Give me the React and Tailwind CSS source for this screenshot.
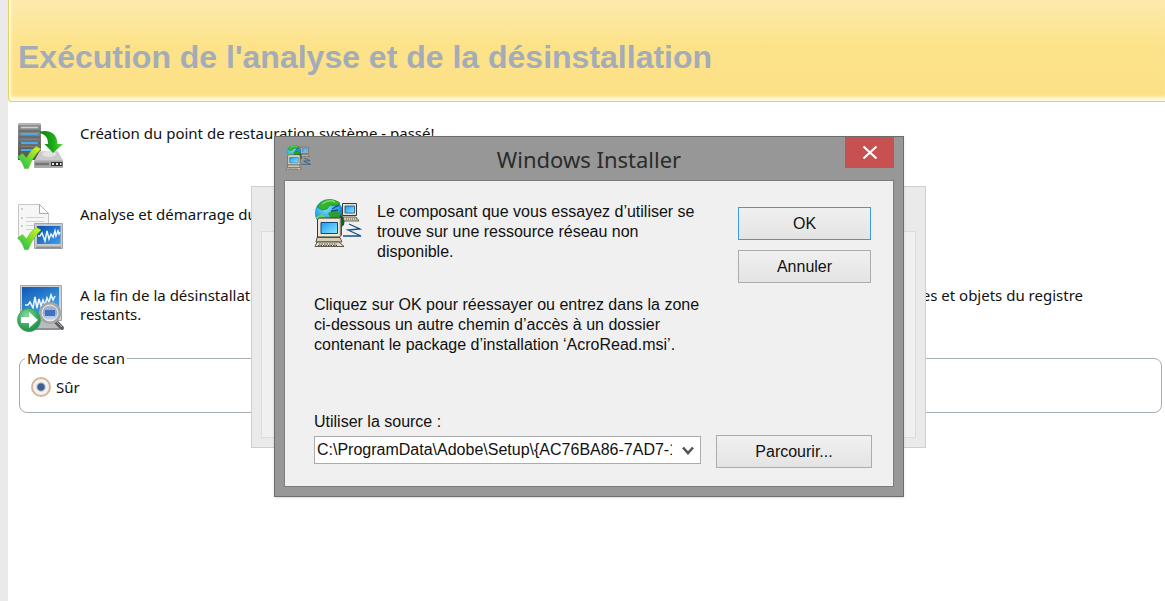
import React, { useState } from 'react';

const CheckMark = ({ id }) => (
  <>
    <linearGradient id={id} x1="0" y1="1" x2="1" y2="0">
      <stop offset="0" stopColor="#12b56a" />
      <stop offset="0.5" stopColor="#6fdc2c" />
      <stop offset="1" stopColor="#eaf71f" />
    </linearGradient>
    <path
      d="M0.500 35l5-3.500 4 4.500c2.500-5 6-9.500 10-11.500l4.500 2.500C18.500 32 14.500 38 11.500 46.500H7.500C6 42 4 38 0.500 35z"
      fill={`url(#${id})`}
      stroke="#6cc42a"
      strokeWidth="0.6"
    />
  </>
);

const RestoreIcon = () => (
  <svg viewBox="0 0 48 48" className="w-12 h-12 shrink-0" aria-hidden="true">
    <defs>
      <linearGradient id="tower" x1="0" y1="0" x2="0" y2="1">
        <stop offset="0" stopColor="#929292" />
        <stop offset="1" stopColor="#505050" />
      </linearGradient>
      <linearGradient id="arrow" x1="0" y1="0" x2="1" y2="0">
        <stop offset="0" stopColor="#0c7a10" />
        <stop offset="0.6" stopColor="#1fae1a" />
        <stop offset="1" stopColor="#58dc38" />
      </linearGradient>
      <linearGradient id="drive" x1="0" y1="0" x2="0" y2="1">
        <stop offset="0" stopColor="#d9d9d9" />
        <stop offset="1" stopColor="#9a9a9a" />
      </linearGradient>
    </defs>
    <path d="M1 3l1-2h21l1 2v35H1z" fill="url(#tower)" />
    <path d="M1 3l1-2h21l1 2z" fill="#b5b5b5" />
    <path d="M4 5.500h17" stroke="#d0d0d0" strokeWidth="1.500" />
    <path d="M2 9h21M2 15h21M2 21h21M2 27h21" stroke="#5a5a5a" />
    <path d="M4 12h17M4 21h17M4 28h17" stroke="#45aee8" strokeWidth="1.800" />
    <path d="M4 17.500h17M4 24.500h17" stroke="#7e7e7e" />
    <path d="M23 29h18l5 10v7H17v-7z" fill="url(#drive)" />
    <path d="M24 30h16l5 8H19z" fill="#cbcbcb" />
    <ellipse cx="32" cy="32" rx="7" ry="3" fill="#e2e2e2" />
    <path d="M17 39h29v7H17z" fill="#a8a8a8" />
    <path d="M18 42h14" stroke="#757575" strokeWidth="2.500" />
    <path d="M34 40h11.500v4H34z" fill="#2e2e2e" />
    <path d="M35 41h2v2h-2zM39 41h2v2h-2zM43 41h1.500v2H43z" fill="#eee" />
    <path d="M23 9.500c9-2 17 1 17.500 12.500h5.500l-10 9-8.500-9H31c0-6-2-9-8-11z" fill="url(#arrow)" />
    <CheckMark id="check-restore" />
  </svg>
);

const AnalyseIcon = () => (
  <svg viewBox="0 0 48 48" className="w-12 h-12 shrink-0" aria-hidden="true">
    <defs>
      <linearGradient id="screen-small" x1="0" y1="0" x2="1" y2="1">
        <stop offset="0" stopColor="#0b4fae" />
        <stop offset="1" stopColor="#3e9de8" />
      </linearGradient>
    </defs>
    <path d="M1.500 1.500h21l9 9V36h-30z" fill="#f6f6f6" stroke="#c6c6c6" />
    <path d="M22.500 1.500v9h9z" fill="#fff" stroke="#aaa" />
    <path d="M9 14.500h18M9 18.500h18M9 22.500h18M9 26.500h12" stroke="#d2d2d2" />
    <path d="M4 5h2v2H4zM4 14h2v2H4zM4 22h2v2H4z" fill="#ccc" />
    <path d="M17.500 20.500h28v25h-28z" fill="#c7c9cc" stroke="#a2a4a8" />
    <path d="M19 43.500h25v2H19z" fill="#8c8e92" />
    <path d="M20 23h23.500v18H20z" fill="url(#screen-small)" />
    <path
      d="M21 33h2l2-3 3 8 2-10 2 8 2-5 2 3 2-6 1 5 2-5 1 3 1-2"
      fill="none"
      stroke="#e8f6ff"
      strokeWidth="1.500"
    />
    <CheckMark id="check-analyse" />
  </svg>
);

const ScanIcon = () => (
  <svg viewBox="0 0 48 48" className="w-12 h-12 shrink-0" aria-hidden="true">
    <defs>
      <linearGradient id="screen-big" x1="0" y1="0" x2="0.6" y2="1">
        <stop offset="0" stopColor="#0f59b4" />
        <stop offset="1" stopColor="#46a4ea" />
      </linearGradient>
      <radialGradient id="go" cx="0.4" cy="0.3" r="0.8">
        <stop offset="0" stopColor="#8ed9a0" />
        <stop offset="0.5" stopColor="#3fae63" />
        <stop offset="1" stopColor="#178443" />
      </radialGradient>
      <linearGradient id="lens" x1="0" y1="0" x2="0" y2="1">
        <stop offset="0" stopColor="#b5bcc6" />
        <stop offset="0.5" stopColor="#8aa9d8" />
        <stop offset="1" stopColor="#f0f2f5" />
      </linearGradient>
    </defs>
    <path d="M3.500 1.500h41v35h-41z" fill="#d0d2d5" stroke="#a3a5a8" />
    <path d="M5 3h37v29H5z" fill="url(#screen-big)" />
    <path d="M13 37h29l3 8H10z" fill="#b9bbbe" />
    <path d="M12 44h31v2H12z" fill="#8e9093" />
    <path
      d="M8 21h3l2-3 3 6 2-11 2 11 2-9 2 7 2-6 2 5 2-7 2 4 2-7 2 5 2-4"
      fill="none"
      stroke="#e8f6ff"
      strokeWidth="1.600"
    />
    <path d="M38 37l7 7" stroke="#5e5e5e" strokeWidth="4" strokeLinecap="round" />
    <path d="M38 36l7 7" stroke="#b0b0b0" strokeWidth="1" />
    <circle cx="33" cy="29" r="9.500" fill="url(#lens)" stroke="#a6a6a6" strokeWidth="3" />
    <circle cx="33" cy="29" r="8" fill="none" stroke="#eee" />
    <path d="M28 26h10v6H28z" fill="#4470bd" />
    <circle cx="12" cy="36" r="11.500" fill="url(#go)" stroke="#3b9a5c" strokeWidth="0.800" />
    <path d="M4 33h8v-5l9 8-9 8v-5H4z" fill="#fff" />
  </svg>
);

const InstallerIcon = ({ id, className }) => (
  <svg viewBox="0 0 48 48" className={className} aria-hidden="true">
    <defs>
      <radialGradient id={`${id}-globe`} cx="0.4" cy="0.3" r="0.8">
        <stop offset="0" stopColor="#7fe4fb" />
        <stop offset="0.6" stopColor="#1d9be0" />
        <stop offset="1" stopColor="#0b3f93" />
      </radialGradient>
      <linearGradient id={`${id}-glass`} x1="0" y1="0" x2="1" y2="1">
        <stop offset="0" stopColor="#1f9cf0" />
        <stop offset="1" stopColor="#8ce8ff" />
      </linearGradient>
    </defs>
    <circle cx="15" cy="14" r="14" fill={`url(#${id}-globe)`} />
    <path d="M3 8C7 1 18-2 26 4l-3 3-7-1-3 4-5 1-3-2z" fill="#35b32b" stroke="#1c7c1c" strokeWidth="0.600" />
    <path d="M8 5c4-3 9-4 13-2" fill="none" stroke="#7be05f" strokeWidth="1.500" />
    <path d="M14 14l6-3 5 2 1 6-4 6-5-4-1-3z" fill="#2f9e2b" />
    <path d="M2 18l6-3 5 5-9 1z" fill="#6ed44a" />
    <path d="M18 10l7-4M17 12l7-1" stroke="#124f8c" strokeWidth="1.300" />
    <path d="M26 16l5 3-1 7-5 4z" fill="#0d5f1c" />
    <path d="M28.500 4.500h14v12h-14z" fill="#e9e2cf" stroke="#3e3a34" />
    <path d="M31 7h9.500v7H31z" fill={`url(#${id}-glass)`} stroke="#1a4c86" strokeWidth="0.800" />
    <path d="M29 18h13l3 4H30z" fill="#d8cfb8" stroke="#4a453c" strokeWidth="0.800" />
    <path d="M32 20h11" stroke="#5d574c" strokeDasharray="1 1" />
    <path d="M3.500 20.500l2-1.500h22v17l-2 2h-22z" fill="#efe8d4" stroke="#38342e" />
    <path d="M26.500 20v17" stroke="#8b8373" strokeWidth="1.500" />
    <path d="M7 23.500h16.500v11H7z" fill={`url(#${id}-glass)`} stroke="#12457d" />
    <path d="M3 38.500h23l2 4.500H2z" fill="#d8cfb8" stroke="#38342e" strokeWidth="0.800" />
    <path d="M3 43h22l5 4.500H1z" fill="#e5dcc6" stroke="#38342e" strokeWidth="0.800" />
    <path d="M5 45h18M4 46.500h20" stroke="#4d473d" strokeDasharray="1.500 1" />
    <path d="M35 25l11 5-12 1 13 6H29" fill="none" stroke="#174f86" strokeWidth="1.300" />
  </svg>
);

const ProgressStep = ({ icon, children }) => (
  <li className="flex h-[81px] items-start gap-[15px]">
    {icon}
    <div className="flex-1 pt-[2px] leading-[19px]">{children}</div>
  </li>
);

const DialogButton = ({ primary, className, children }) => (
  <button
    type="button"
    className={`h-[33px] border bg-linear-to-b from-[#f0f0f0] to-[#e4e4e4] text-center leading-5 ${
      primary ? 'border-[#3c9be0]' : 'border-[#acacac]'
    } ${className}`}
  >
    {children}
  </button>
);

const InstallerDialog = () => {
  const [source, setSource] = useState('default');

  return (
    <section
      role="dialog"
      aria-labelledby="installer-title"
      className="absolute left-[266px] top-[136px] w-[630px] border border-[#6c6c6c] bg-[#979797] px-[9px] pb-[9px] font-['Liberation_Sans',Arial,sans-serif] text-base leading-5 text-[#111] shadow-sm"
    >
      <header className="flex h-[43px] items-start">
        <InstallerIcon id="small" className="ml-[2px] mt-2 h-[25px] w-[25px]" />
        <h2
          id="installer-title"
          className="flex-1 pl-[22px] pt-2 text-center font-['Noto_Sans','Open_Sans',sans-serif] text-[22px] leading-7 text-[#2b2b2b]"
        >
          Windows Installer
        </h2>
        <button
          type="button"
          aria-label="Fermer"
          className="flex h-[31px] w-[49px] items-center justify-center bg-[#c75050]"
        >
          <svg viewBox="0 0 14 12" className="h-[13px] w-4" aria-hidden="true">
            <path d="M1 0.500l12 11M13 0.500L1 11.500" stroke="#fff" strokeWidth="2" />
          </svg>
        </button>
      </header>

      <div className="border border-[#7c7c7c] bg-[#f0f0f0] pb-[18px] pl-[29px] pr-[21px] pt-4">
        <div className="flex items-start">
          <InstallerIcon id="large" className="mt-[2px] h-12 w-12 shrink-0" />
          <p className="flex-1 pl-[15px] pt-[5px]">
            Le composant que vous essayez d’utiliser se
            <br />
            trouve sur une ressource réseau non
            <br />
            disponible.
          </p>
          <div className="mr-[1px] flex flex-col gap-[10px] pt-[10px]">
            <DialogButton primary className="w-[133px]">OK</DialogButton>
            <DialogButton className="w-[133px]">Annuler</DialogButton>
          </div>
        </div>

        <p className="mt-3">
          Cliquez sur OK pour réessayer ou entrez dans la zone
          <br />
          ci-dessous un autre chemin d’accès à un dossier
          <br />
          contenant le package d’installation ‘AcroRead.msi’.
        </p>

        <label htmlFor="source" className="mt-[57px] block">
          Utiliser la source :
        </label>
        <div className="mt-[3px] flex items-start gap-[15px]">
          <div className="relative flex-1 pt-[1px]">
            <select
              id="source"
              value={source}
              onChange={(e) => setSource(e.target.value)}
              className="block h-7 w-full appearance-none border border-[#acacac] bg-white pl-[2px] pr-7 leading-5"
            >
              <option value="default">
                {'C:\\ProgramData\\Adobe\\Setup\\{AC76BA86-7AD7-1036-7B44-AB0000000001}\\'}
              </option>
            </select>
            <svg
              viewBox="0 0 12 10"
              className="pointer-events-none absolute right-[7px] top-[11px] h-[10px] w-3"
              aria-hidden="true"
            >
              <path d="M1 1.500l5 5.500 5-5.500" fill="none" stroke="#555" strokeWidth="2.600" />
            </svg>
          </div>
          <DialogButton className="w-[156px]">Parcourir...</DialogButton>
        </div>
      </div>
    </section>
  );
};

const App = () => {
  const [mode, setMode] = useState('safe');

  return (
    <div className="relative min-h-screen overflow-hidden border-l-8 border-[#eaeaea] bg-white font-['Noto_Sans','DejaVu_Sans_Condensed',sans-serif] text-[15px] text-[#111]">
      <header className="flex h-[102px] items-center rounded-bl-sm border-b border-l border-[#e3d36b] bg-linear-to-b from-[#fdeaac] via-[#fce38a] via-45% to-[#fce086] pl-[9px] pt-3 shadow-[inset_2px_-4px_3px_#fff8dc]">
        <h1 className="font-['Liberation_Sans',Arial,sans-serif] text-[32px] font-bold leading-10 text-[#a3acb8]">
          Exécution de l'analyse et de la désinstallation
        </h1>
      </header>

      <main className="pl-[9px] pr-[3px] pt-5">
        <ul>
          <ProgressStep icon={<RestoreIcon />}>
            <p>Création du point de restauration système - passé!</p>
          </ProgressStep>
          <ProgressStep icon={<AnalyseIcon />}>
            <p>Analyse et démarrage du programme</p>
          </ProgressStep>
          <ProgressStep icon={<ScanIcon />}>
            <p className="flex max-w-[1003px] justify-between">
              <span>A la fin de la désinstallation</span>
              <span>traces et objets du registre</span>
            </p>
            <p>restants.</p>
          </ProgressStep>
        </ul>

        <fieldset className="-mt-[17px] ml-[2px] h-[65px] rounded-lg border border-[#a3adb2] pl-[11px]">
          <legend className="-ml-[6px] px-[2px] leading-5">Mode de scan</legend>
          <label className="flex items-center gap-[5px] pt-[9px] leading-5">
            <input
              type="radio"
              name="mode"
              value="safe"
              checked={mode === 'safe'}
              onChange={(e) => setMode(e.target.value)}
              className="h-5 w-5 appearance-none rounded-full border-2 border-[#d6b49c] bg-[#f5f1ec] checked:bg-[radial-gradient(circle,#3f5f94_3px,#f5f1ec_5px)]"
            />
            Sûr
          </label>
        </fieldset>
      </main>

      {/* inactive window left behind the installer dialog */}
      <div className="absolute left-[243px] top-[186px] h-[262px] w-[675px] border border-[#cfcfcf] bg-[#eaeaea] px-[9px] pb-[9px] pt-[44px]">
        <div className="h-full border border-[#dcdcdc] bg-[#f0f0f0]" />
      </div>

      <InstallerDialog />
    </div>
  );
};

export default App;
